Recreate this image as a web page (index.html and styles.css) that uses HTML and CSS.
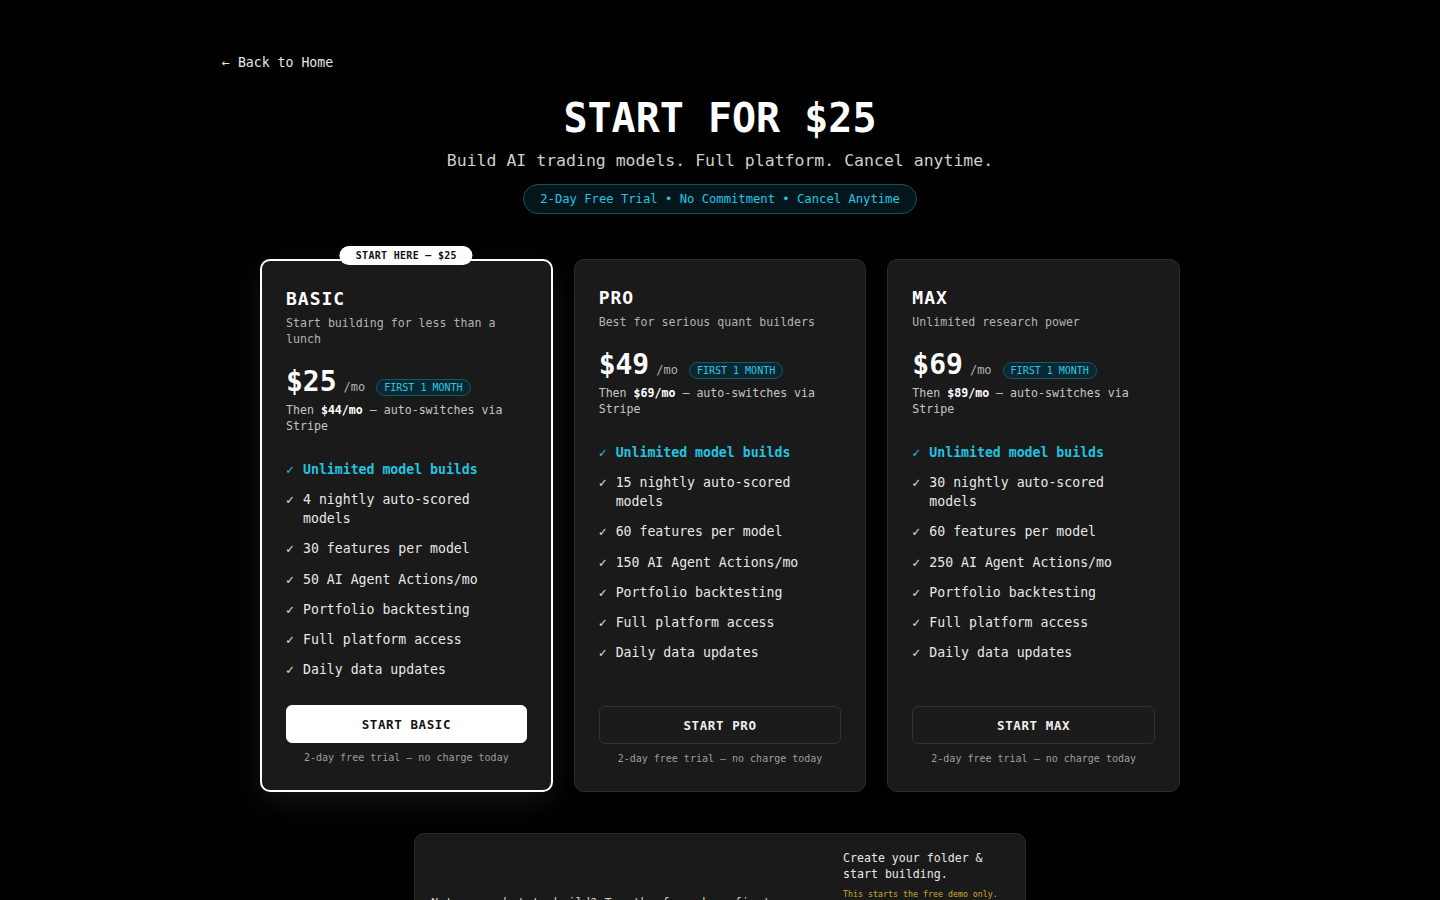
FILE: index.html
```html
<!DOCTYPE html>
<html lang="en">
<head>
<meta charset="utf-8">
<title>Pricing — Start for $25</title>
<link rel="stylesheet" href="styles.css">
</head>
<body>
<div class="page">
  <a class="back" href="#">← Back to Home</a>

  <header class="hero">
    <h1 class="title">START FOR $25</h1>
    <p class="subtitle">Build AI trading models. Full platform. Cancel anytime.</p>
    <div class="trial-pill">2-Day Free Trial • No Commitment • Cancel Anytime</div>
  </header>

  <section class="plans">
    <article class="card featured">
      <span class="tag">START HERE — $25</span>
      <h2 class="plan-name">BASIC</h2>
      <p class="plan-desc">Start building for less than a lunch</p>
      <div class="price-row">
        <span class="amount">$25</span>
        <span class="per">/mo</span>
        <span class="first">FIRST 1 MONTH</span>
      </div>
      <p class="then">Then <strong>$44/mo</strong> — auto-switches via Stripe</p>
      <ul class="features">
        <li class="hl"><span class="check">✓</span><span>Unlimited model builds</span></li>
        <li><span class="check">✓</span><span>4 nightly auto-scored models</span></li>
        <li><span class="check">✓</span><span>30 features per model</span></li>
        <li><span class="check">✓</span><span>50 AI Agent Actions/mo</span></li>
        <li><span class="check">✓</span><span>Portfolio backtesting</span></li>
        <li><span class="check">✓</span><span>Full platform access</span></li>
        <li><span class="check">✓</span><span>Daily data updates</span></li>
      </ul>
      <div class="cta">
        <button class="btn btn-primary">START BASIC</button>
        <p class="fine">2-day free trial — no charge today</p>
      </div>
    </article>

    <article class="card">
      <h2 class="plan-name">PRO</h2>
      <p class="plan-desc">Best for serious quant builders</p>
      <div class="price-row">
        <span class="amount">$49</span>
        <span class="per">/mo</span>
        <span class="first">FIRST 1 MONTH</span>
      </div>
      <p class="then">Then <strong>$69/mo</strong> — auto-switches via Stripe</p>
      <ul class="features">
        <li class="hl"><span class="check">✓</span><span>Unlimited model builds</span></li>
        <li><span class="check">✓</span><span>15 nightly auto-scored models</span></li>
        <li><span class="check">✓</span><span>60 features per model</span></li>
        <li><span class="check">✓</span><span>150 AI Agent Actions/mo</span></li>
        <li><span class="check">✓</span><span>Portfolio backtesting</span></li>
        <li><span class="check">✓</span><span>Full platform access</span></li>
        <li><span class="check">✓</span><span>Daily data updates</span></li>
      </ul>
      <div class="cta">
        <button class="btn">START PRO</button>
        <p class="fine">2-day free trial — no charge today</p>
      </div>
    </article>

    <article class="card">
      <h2 class="plan-name">MAX</h2>
      <p class="plan-desc">Unlimited research power</p>
      <div class="price-row">
        <span class="amount">$69</span>
        <span class="per">/mo</span>
        <span class="first">FIRST 1 MONTH</span>
      </div>
      <p class="then">Then <strong>$89/mo</strong> — auto-switches via Stripe</p>
      <ul class="features">
        <li class="hl"><span class="check">✓</span><span>Unlimited model builds</span></li>
        <li><span class="check">✓</span><span>30 nightly auto-scored models</span></li>
        <li><span class="check">✓</span><span>60 features per model</span></li>
        <li><span class="check">✓</span><span>250 AI Agent Actions/mo</span></li>
        <li><span class="check">✓</span><span>Portfolio backtesting</span></li>
        <li><span class="check">✓</span><span>Full platform access</span></li>
        <li><span class="check">✓</span><span>Daily data updates</span></li>
      </ul>
      <div class="cta">
        <button class="btn">START MAX</button>
        <p class="fine">2-day free trial — no charge today</p>
      </div>
    </article>
  </section>

  <section class="demo">
    <p class="demo-text">Not sure what to build? Try the free demo first — no card needed.</p>
    <div class="demo-side">
      <p class="demo-title">Create your folder &amp; start building.</p>
      <p class="demo-note">This starts the free demo only.</p>
      <input class="demo-input" type="text" placeholder="folder-name">
      <button class="demo-btn">START DEMO</button>
    </div>
  </section>
</div>
</body>
</html>
```

FILE: styles.css
```css
* { box-sizing: border-box; }

html, body {
  margin: 0;
  background: #000;
  color: #e8e8e8;
  font-family: "DejaVu Sans Mono", "Liberation Mono", monospace;
}

.page {
  width: 1000px;
  margin: 0 auto;
  padding: 53px 0 80px;
}

.back {
  display: block;
  width: fit-content;
  padding-left: 2px;
  font-size: 13.2px;
  line-height: 20px;
  color: #e6e6e6;
  text-decoration: none;
}

.hero {
  display: flex;
  flex-direction: column;
  align-items: center;
  text-align: center;
  margin-top: 21px;
}

.title {
  margin: 0;
  font-size: 40px;
  line-height: 48px;
  font-weight: 700;
  color: #fff;
}

.subtitle {
  margin: 7px 0 0;
  font-size: 16.5px;
  line-height: 24px;
  color: #cfcfcf;
}

.trial-pill {
  margin-top: 11px;
  padding: 6px 16px;
  border: 1px solid #0f5463;
  border-radius: 999px;
  background: #03161b;
  color: #23c6e3;
  font-size: 12.2px;
  line-height: 16px;
  font-weight: 400;
  white-space: nowrap;
}

.plans {
  width: 920px;
  margin: 45px auto 0;
  display: grid;
  grid-template-columns: repeat(3, 1fr);
  gap: 21px;
}

.card {
  position: relative;
  display: flex;
  flex-direction: column;
  background: #1a1a1a;
  border: 1px solid #2c2c2c;
  border-radius: 10px;
  padding: 24px;
}

.card.featured {
  border: 2px solid #fff;
  box-shadow: 0 10px 30px rgba(255, 255, 255, 0.08);
}

.tag {
  position: absolute;
  top: -15px;
  left: 50%;
  transform: translateX(-50%);
  white-space: nowrap;
  background: #fff;
  color: #111;
  font-size: 10px;
  line-height: 13px;
  font-weight: 700;
  letter-spacing: 0.3px;
  padding: 3px 16px;
  border-radius: 999px;
}

.plan-name {
  margin: 0 0 3px;
  font-size: 18px;
  line-height: 27px;
  font-weight: 700;
  letter-spacing: 1px;
  color: #fff;
}

.plan-desc {
  margin: 0;
  font-size: 11.6px;
  line-height: 16px;
  color: #b3b3b3;
}

.price-row {
  display: flex;
  align-items: baseline;
  margin-top: 20px;
  height: 30px;
}

.amount {
  font-size: 28px;
  line-height: 30px;
  font-weight: 700;
  color: #fff;
}

.per {
  margin-left: 7px;
  font-size: 12px;
  line-height: 14px;
  color: #b0b0b0;
}

.first {
  margin-left: 11px;
  padding: 1px 7px;
  border: 1px solid #14596a;
  border-radius: 999px;
  background: #0a2830;
  color: #34c3e4;
  font-size: 10px;
  line-height: 13px;
}

.then {
  margin: 5px 0 0;
  font-size: 11.6px;
  line-height: 16px;
  color: #c6c6c6;
}

.then strong {
  color: #fff;
  font-weight: 700;
}

.features {
  list-style: none;
  margin: 26px 0 0;
  padding: 0 4px 0 0;
  display: flex;
  flex-direction: column;
  gap: 11.2px;
}

.features li {
  display: flex;
  font-size: 13.2px;
  line-height: 19px;
  color: #e8e8e8;
}

.check {
  flex: 0 0 17px;
  font-size: 13px;
  color: #e0e0e0;
}

.features li.hl {
  color: #22c4e0;
  font-weight: 700;
}

.features li.hl .check {
  color: #22c4e0;
}

.cta {
  margin-top: auto;
  padding-top: 26px;
}

.btn {
  display: block;
  width: 100%;
  height: 38px;
  border: 1px solid #323232;
  border-radius: 6px;
  background: #1b1b1b;
  color: #f0f0f0;
  font-family: inherit;
  font-size: 12.5px;
  font-weight: 700;
  letter-spacing: 0.6px;
  cursor: pointer;
}

.btn-primary {
  background: #fff;
  border-color: #fff;
  color: #111;
}

.fine {
  margin: 7px 0 0;
  text-align: center;
  font-size: 10px;
  line-height: 16px;
  color: #9e9e9e;
}

.demo {
  width: 612px;
  margin: 41px auto 0;
  display: flex;
  gap: 24px;
  padding: 16px;
  background: #1a1a1a;
  border: 1px solid #2a2a2a;
  border-radius: 10px;
}

.demo-text {
  flex: 1;
  align-self: center;
  margin: 0;
  font-size: 12px;
  line-height: 18px;
  color: #d0d0d0;
}

.demo-side {
  flex: 0 0 166px;
  display: flex;
  flex-direction: column;
}

.demo-title {
  margin: 0;
  font-size: 11.6px;
  line-height: 16px;
  color: #e8e8e8;
}

.demo-note {
  margin: 6px 0 0;
  font-size: 8.3px;
  line-height: 12px;
  color: #d2a52a;
}

.demo-input {
  margin-top: 10px;
  height: 30px;
  padding: 0 8px;
  border: 1px solid #333;
  border-radius: 6px;
  background: #111;
  color: #ddd;
  font-family: inherit;
  font-size: 11px;
}

.demo-btn {
  margin-top: 6px;
  height: 28px;
  border: 0;
  border-radius: 6px;
  background: #fff;
  color: #111;
  font-family: inherit;
  font-size: 11px;
  font-weight: 700;
}
```
